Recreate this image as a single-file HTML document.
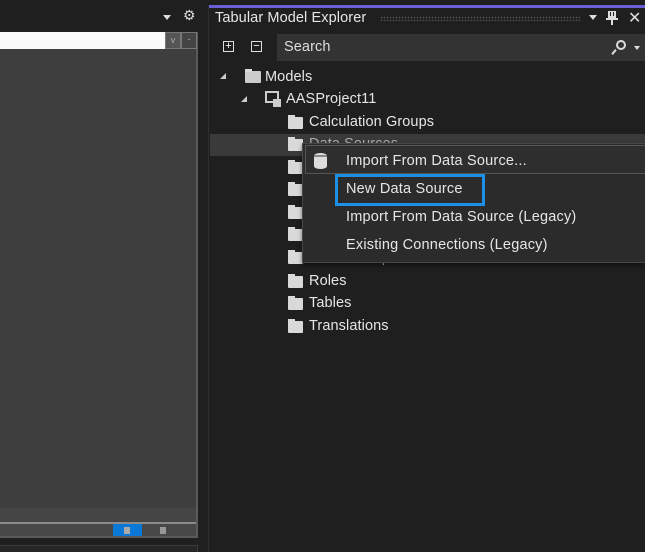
<!DOCTYPE html>
<html><head><style>
body{margin:0;width:645px;height:552px;background:#1f1f1f;position:relative;overflow:hidden;font-family:"Liberation Sans",sans-serif;color:#e8e8e8;}
div{position:absolute;box-sizing:border-box;}
.t{font-size:14.5px;white-space:nowrap;color:#e6e6e6;letter-spacing:0.1px;}
.f{width:15px;height:12px;background:#d9d9d9;border-radius:1px;}
.f:before{content:"";position:absolute;left:0;top:-2px;width:7px;height:3px;background:#d9d9d9;}
.mi{font-size:14.5px;color:#e6e6e6;white-space:nowrap;letter-spacing:0.2px;}
</style></head><body>
<!-- left panel -->
<div style="left:0;top:0;width:198px;height:32px;background:#1f1f1f"></div>
<div style="left:163px;top:15px;width:0;height:0;border-left:4px solid transparent;border-right:4px solid transparent;border-top:5px solid #ddd"></div>
<div class="t" style="left:183px;top:7px;font-size:14px;color:#ddd">⚙</div>
<div style="left:0;top:32px;width:198px;height:506px;background:#3e3e3e;border-right:2px solid #5a5a5a;border-bottom:2px solid #5a5a5a"></div>
<div style="left:0;top:32px;width:165px;height:17px;background:#fbfbfb"></div>
<div style="left:165px;top:32px;width:16px;height:17px;background:#555;border:1px solid #777;font-size:9px;color:#aaa;text-align:center;line-height:14px">v</div>
<div style="left:181px;top:32px;width:16px;height:17px;background:#444;border:1px solid #777;font-size:9px;color:#aaa;text-align:center;line-height:12px">-</div>
<div style="left:0;top:508px;width:196px;height:15px;background:#454545"></div>
<div style="left:0;top:522px;width:196px;height:2px;background:#8a8a8a"></div>
<div style="left:0;top:524px;width:196px;height:12px;background:#484848"></div>
<div style="left:113px;top:524px;width:29px;height:12px;background:#0a78d7"></div>
<div style="left:124px;top:527px;width:6px;height:7px;background:#aaa"></div>
<div style="left:160px;top:527px;width:6px;height:7px;background:#999"></div>
<div style="left:0;top:545px;width:198px;height:7px;background:#262626;border-top:1px solid #3a3a3a;border-right:1px solid #3a3a3a"></div>
<!-- right panel -->
<div style="left:208px;top:5px;width:437px;height:547px;background:#1f1f1f;border-left:1px solid #2e2e2e"></div>
<div style="left:209px;top:5px;width:436px;height:3px;background:#6a5fd4"></div>
<div class="t" style="left:215px;top:10px;font-size:14.5px;color:#e6e6e6">Tabular Model Explorer</div>
<div style="left:380px;top:16px;width:200px;height:5px;background-image:radial-gradient(#555 35%,transparent 40%);background-size:3px 3px"></div>
<div style="left:589px;top:15px;width:0;height:0;border-left:4px solid transparent;border-right:4px solid transparent;border-top:5px solid #ddd"></div>
<div style="left:611px;top:12px;width:2px;height:13px;background:#ddd"></div>
<div style="left:608px;top:11px;width:8px;height:7px;border:2px solid #ddd;border-top-width:1px"></div>
<div style="left:606px;top:18px;width:12px;height:2px;background:#ddd"></div>
<div class="t" style="left:628px;top:8px;font-size:16px;color:#ddd">✕</div>
<div style="left:223px;top:41px;width:11px;height:11px;border:1px solid #ddd;font-size:11px;line-height:9px;text-align:center;color:#fff">+</div>
<div style="left:251px;top:41px;width:11px;height:11px;border:1px solid #ddd;font-size:11px;line-height:8px;text-align:center;color:#fff">−</div>
<div style="left:277px;top:34px;width:368px;height:27px;background:#333"></div>
<div class="t" style="left:284px;top:39px;color:#ddd">Search</div>
<div style="left:616px;top:40px;width:10px;height:10px;border:2px solid #ddd;border-radius:50%"></div>
<div style="left:613px;top:49px;width:2px;height:6px;background:#ddd;transform:rotate(40deg)"></div>
<div style="left:634px;top:46px;width:0;height:0;border-left:3px solid transparent;border-right:3px solid transparent;border-top:4px solid #ddd"></div>
<!-- tree -->
<div style="left:220px;top:73px;width:0;height:0;border-left:6px solid transparent;border-bottom:6px solid #ccc"></div>
<div class="f" style="left:245px;top:71px;width:16px;height:12px;background:#ccc"></div>
<div class="t" style="left:265px;top:69px">Models</div>
<div style="left:241px;top:96px;width:0;height:0;border-left:6px solid transparent;border-bottom:6px solid #ccc"></div>
<div style="left:265px;top:91px;width:14px;height:12px;border:2px solid #ccc"></div>
<div style="left:273px;top:99px;width:8px;height:8px;background:#ccc"></div>
<div class="t" style="left:286px;top:91px">AASProject11</div>
<div class="f" style="left:288px;top:117px"></div><div class="t" style="left:309px;top:114px">Calculation Groups</div>
<div style="left:210px;top:134px;width:435px;height:22px;background:#3a3a3a"></div>
<div class="f" style="left:288px;top:139px"></div><div class="t" style="left:309px;top:136px;color:#aaa">Data Sources</div>
<div class="f" style="left:288px;top:162px"></div>
<div class="f" style="left:288px;top:184px"></div>
<div class="f" style="left:288px;top:207px"></div>
<div class="f" style="left:288px;top:229px"></div>
<div class="f" style="left:288px;top:252px"></div><div class="t" style="left:309px;top:250px;color:#bbb">Relationships</div>
<div class="f" style="left:288px;top:276px"></div><div class="t" style="left:309px;top:273px">Roles</div>
<div class="f" style="left:288px;top:298px"></div><div class="t" style="left:309px;top:295px">Tables</div>
<div class="f" style="left:288px;top:321px"></div><div class="t" style="left:309px;top:318px">Translations</div>
<!-- context menu -->
<div style="left:302px;top:143px;width:350px;height:120px;background:#2b2b2b;border:1px solid #474747;box-shadow:0 2px 4px rgba(0,0,0,.5)"></div>
<div style="left:305px;top:145px;width:345px;height:29px;background:#2e2e2e;border:1px solid #555"></div>
<div style="left:314px;top:153px;width:13px;height:16px;background:#ddd;border-radius:6px/3px"></div>
<div style="left:314px;top:155px;width:13px;height:2px;background:#888"></div>
<div class="mi" style="left:346px;top:153px">Import From Data Source...</div>
<div style="left:335px;top:174px;width:150px;height:32px;border:3px solid #1e8fe6"></div>
<div class="mi" style="left:346px;top:181px">New Data Source</div>
<div class="mi" style="left:346px;top:209px">Import From Data Source (Legacy)</div>
<div class="mi" style="left:346px;top:237px">Existing Connections (Legacy)</div>
</body></html>
